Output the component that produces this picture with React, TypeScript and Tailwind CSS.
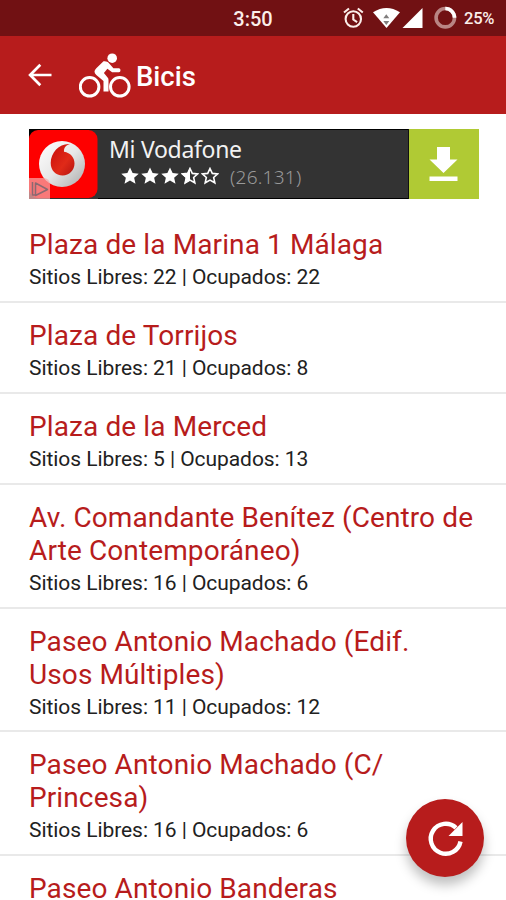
const stations: { name: string[]; detail?: string }[] = [
  { name: ['Plaza de la Marina 1 Málaga'], detail: 'Sitios Libres: 22 | Ocupados: 22' },
  { name: ['Plaza de Torrijos'], detail: 'Sitios Libres: 21 | Ocupados: 8' },
  { name: ['Plaza de la Merced'], detail: 'Sitios Libres: 5 | Ocupados: 13' },
  { name: ['Av. Comandante Benítez (Centro de', 'Arte Contemporáneo)'], detail: 'Sitios Libres: 16 | Ocupados: 6' },
  { name: ['Paseo Antonio Machado (Edif.', 'Usos Múltiples)'], detail: 'Sitios Libres: 11 | Ocupados: 12' },
  { name: ['Paseo Antonio Machado (C/', 'Princesa)'], detail: 'Sitios Libres: 16 | Ocupados: 6' },
  { name: ['Paseo Antonio Banderas'] },
];

const STAR = 'M10 .5l2.900 6.200 6.800.7-5.100 4.500 1.500 6.700L10 15.100l-6.100 3.500 1.500-6.700L.3 7.400l6.800-.7z';

function Star({ kind }: { kind: 'full' | 'half' | 'empty' }) {
  return (
    <svg viewBox="0 0 20 20" className="h-[18px] w-[18px]">
      {kind === 'full' && <path d={STAR} fill="#fff" />}
      {kind !== 'full' && (
        <path d={STAR} transform="translate(1.2 1.2) scale(.88)" fill="none" stroke="#fff" strokeWidth="2" />
      )}
      {kind === 'half' && <path d="M10 .5v14.600l-6.100 3.500 1.500-6.700L.3 7.400l6.800-.7z" fill="#fff" />}
    </svg>
  );
}

function StatusBar() {
  return (
    <div className="relative h-9 shrink-0 bg-[#711113]">
      <div className="absolute inset-x-0 top-[7px] text-center text-[20px] font-medium leading-6 text-[#fbeeea]">3:50</div>
      <svg viewBox="0 0 176 36" className="absolute right-0 top-0 h-9 w-[176px]">
        <g fill="none" stroke="#fbeeea" strokeWidth="2.1">
          <circle cx="23.3" cy="19" r="7.7" />
          <path d="M23.3 14v5.5l3.8 2.6M14 12.5l5-4M32.8 12.5l-5-4" />
        </g>
        <path d="M43 12.3Q56.5 3.5 70 12.3L56.5 28z" fill="#fff" />
        <path d="M56.3 14.3l3 4h-6zM56.3 25l3-4h-6z" fill="#807d7d" />
        <path d="M92.5 8v20H72.5z" fill="#fff" />
        <circle cx="115.3" cy="17.7" r="9.2" fill="none" stroke="#b98584" strokeWidth="3.6" />
        <path d="M115.3 8.5a9.2 9.2 0 0 1 9.2 9.2" fill="none" stroke="#fff" strokeWidth="3.6" />
      </svg>
      <div className="absolute left-[464px] top-2 text-[16.500px] font-medium tracking-[-0.2px] leading-[22px] text-[#fbeeea]">25%</div>
    </div>
  );
}

function Header() {
  return (
    <header className="flex h-[78px] shrink-0 items-center bg-[#b71c1c] text-white">
      <svg viewBox="0 0 24 24" className="ml-7 h-6 w-6" fill="none" stroke="#fff" strokeWidth="2.7">
        <path d="M23.5 12H2.5M12.3 1.8L2.1 12l10.2 10.2" />
      </svg>
      <svg viewBox="0 0 52 46" className="ml-[27px] mt-px h-[46px] w-[52px]" fill="none" stroke="#fff">
        <circle cx="10.6" cy="33.8" r="9.3" strokeWidth="3" />
        <circle cx="40.8" cy="33.8" r="9.3" strokeWidth="3" />
        <circle cx="33.2" cy="5.2" r="4.8" fill="#fff" stroke="none" />
        <path
          d="M24.500 8.3c2-.5 4.200.2 5.300 1.800l4.6 5.2h5.5c2.100 0 2.100 4 0 4h-6.8l-4.7-3.500-3.500 4.200 3.900 4.8c.6.8.7 1.500.7 2.500v11.3h-5V28l-7.200-6c-2.5-2.300-2.300-4.600 0-6.800z"
          fill="#fff"
          stroke="none"
        />
      </svg>
      <h1 className="ml-[5px] mt-[3px] text-[27.500px] font-medium leading-8">Bicis</h1>
    </header>
  );
}

function AdBanner() {
  return (
    <div className="ml-[29px] flex h-[70px] w-[450px] border-y border-black bg-[#333]">
      <svg viewBox="0 0 69 70" className="-my-px h-[70px] w-[69px] shrink-0">
        <defs>
          <linearGradient id="ring" x1="0" y1="0" x2="1" y2="1">
            <stop offset="0" stopColor="#fff" />
            <stop offset=".5" stopColor="#e8e8e8" />
            <stop offset="1" stopColor="#aaa" />
          </linearGradient>
          <linearGradient id="drop" x1="0" y1="0" x2="1" y2="1">
            <stop offset="0" stopColor="#c90d0b" />
            <stop offset=".6" stopColor="#e02a18" />
            <stop offset="1" stopColor="#b51310" />
          </linearGradient>
        </defs>
        <rect width="69" height="70" fill="#333" />
        <path d="M0 0h69v1H0z" fill="#000" />
        <path d="M0 0h9v9H0z" fill="#000" />
        <rect y="1" width="68.500" height="68" rx="9" fill="#fe0000" />
        <circle cx="33" cy="35" r="23" fill="url(#ring)" />
        <path d="M41 15c-4.500 1.200-6.300 4.200-6 7.700C41.500 23.700 45.500 28.500 45.500 34.500c0 6.800-5.300 12-11.800 12-7 0-12-5-12-12.500C21.700 23 31 14 41 15z" fill="url(#drop)" />
        <path d="M0 49h14q7 0 7 7v14H0z" fill="#f7a8a8" fillOpacity=".72" />
        <path d="M3.500 53v13h3M6.500 54l12 6.500-12 6z" fill="none" stroke="#8b6971" strokeWidth="1.500" strokeLinejoin="round" />
      </svg>
      <div className="ml-[11px] flex-1 text-white [font-family:'Noto_Sans','Open_Sans',sans-serif]">
        <div className="mt-1 text-[23px] leading-[30px] tracking-[-0.3px] text-[#f2f2f2]">Mi Vodafone</div>
        <div className="ml-3 flex h-6 items-center gap-[2px]">
          <Star kind="full" />
          <Star kind="full" />
          <Star kind="full" />
          <Star kind="half" />
          <Star kind="empty" />
          <span className="ml-[9px] mt-[3px] text-[19px] font-light leading-6 tracking-[0.25px] text-[#999]">(26.131)</span>
        </div>
      </div>
      <div className="-my-px h-[70px] w-[71px] border-l border-[#111] bg-[#b0ca34]">
        <svg viewBox="0 0 70 70" className="h-[70px] w-[70px]" fill="#fff">
          <path d="M28 18h13v12.500h7.500L34.500 44 20.500 30.500H28zM20.500 47.500h28V52h-28z" />
        </svg>
      </div>
    </div>
  );
}

export default function App() {
  return (
    <div className="relative flex h-[900px] w-[506px] flex-col overflow-hidden bg-white [font-family:Roboto,sans-serif]">
      <StatusBar />
      <Header />
      <main className="min-h-0 flex-1 overflow-hidden pt-[14.500px]">
        <AdBanner />
        <ul className="mt-[13.700px]">
          {stations.map((s) => (
            <li
              key={s.name[0]}
              className="h-[90.900px] border-b-2 border-[#e9e9e9] pl-[29px] pt-4 last:h-auto last:border-0 has-[span+span]:h-[123.700px]"
            >
              <h2 className="text-[28px] leading-[33px] tracking-[0.11px] text-[#b71c1c]">
                {s.name.map((line) => (
                  <span key={line} className="block whitespace-nowrap">{line}</span>
                ))}
              </h2>
              {s.detail && (
                <p className="pt-1 text-[21px] leading-[25px] tracking-[-0.06px] text-[#212121]">{s.detail}</p>
              )}
            </li>
          ))}
        </ul>
      </main>
      <button
        aria-label="Actualizar"
        className="absolute left-[406px] top-[799px] h-[78px] w-[78px] rounded-full bg-[#b71c1c] shadow-[0_8px_12px_rgba(0,0,0,0.25)]"
      >
        <svg viewBox="0 0 78 78" className="h-[78px] w-[78px]">
          <path d="M54.500 42.500A15 15 0 1 1 50 28.800" fill="none" stroke="#fff" strokeWidth="4.400" />
          <path d="M56.500 23v14H42.500z" fill="#fff" />
        </svg>
      </button>
    </div>
  );
}
